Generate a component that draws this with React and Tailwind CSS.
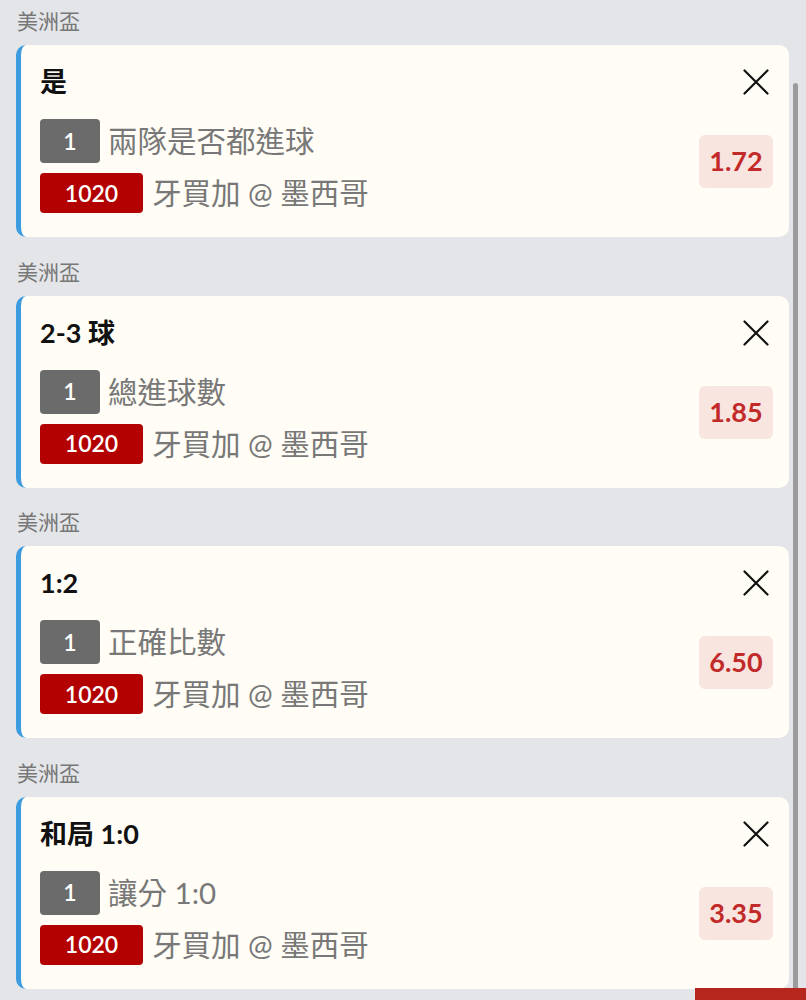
import React from "react";

const bets = [
  { title: "是", market: "兩隊是否都進球", odds: "1.72" },
  { title: "2-3 球", market: "總進球數", odds: "1.85" },
  { title: "1:2", market: "正確比數", odds: "6.50" },
  { title: "和局 1:0", market: "讓分 1:0", odds: "3.35" },
];

const font = { fontFamily: 'Lato, "Noto Sans CJK TC", "Noto Sans", sans-serif' };

function CloseIcon() {
  return (
    <svg width="26" height="26" viewBox="0 0 26 26" fill="none">
      <path d="M1.5 1.5 L24.5 24.5 M24.5 1.5 L1.5 24.5" stroke="#111" strokeWidth="2.2" strokeLinecap="round" />
    </svg>
  );
}

function Card({ bet }) {
  return (
    <div className="flex h-[192px] rounded-[10px] border-l-[5px] border-[#3d9be0] bg-[#fffdf5] pl-[19px] pr-[16px]">
      <div className="flex flex-1 flex-col pt-[20px]">
        <div className="h-[34px] text-[27px] font-bold leading-[34px] text-[#111]">{bet.title}</div>
        <div className="mt-[20px] flex items-center">
          <div className="flex h-[44px] w-[60px] items-center justify-center rounded-[4px] bg-[#6b6b6b] text-[23px] font-semibold text-white">1</div>
          <div className="ml-[8px] text-[29.5px] leading-[44px] text-[#787878]">{bet.market}</div>
        </div>
        <div className="mt-[10px] flex items-center">
          <div className="flex h-[40px] w-[103px] items-center justify-center rounded-[4px] bg-[#b30000] text-[23px] font-semibold text-white">1020</div>
          <div className="ml-[9px] text-[29.5px] leading-[40px] text-[#787878]">牙買加 @ 墨西哥</div>
        </div>
      </div>
      <div className="flex flex-col items-end pt-[24px]">
        <div className="mr-[4px]"><CloseIcon /></div>
        <div className="mt-[40px] flex h-[53px] w-[74px] items-center justify-center rounded-[6px] bg-[#f8e5df] text-[27px] font-bold text-[#c22a2a]">{bet.odds}</div>
      </div>
    </div>
  );
}

export default function App() {
  return (
    <div className="relative h-[1000px] w-[806px] overflow-hidden bg-[#e4e5e9]" style={font}>
      <div className="flex flex-col pl-[16px] pr-[17px] pt-[6px]">
        {bets.map((b, i) => (
          <div key={i} className={i > 0 ? "mt-[19.5px]" : ""}>
            <div className="h-[30px] pl-[1px] text-[21px] leading-[30px] text-[#777]">美洲盃</div>
            <div className="mt-[9px]"><Card bet={b} /></div>
          </div>
        ))}
      </div>
      <div className="absolute left-[793px] top-[83px] h-[920px] w-[5px] rounded-full bg-[#9b9b9d]" />
      <div className="absolute left-[695px] top-[988px] h-[12px] w-[111px] bg-[#b5261c]" />
    </div>
  );
}
